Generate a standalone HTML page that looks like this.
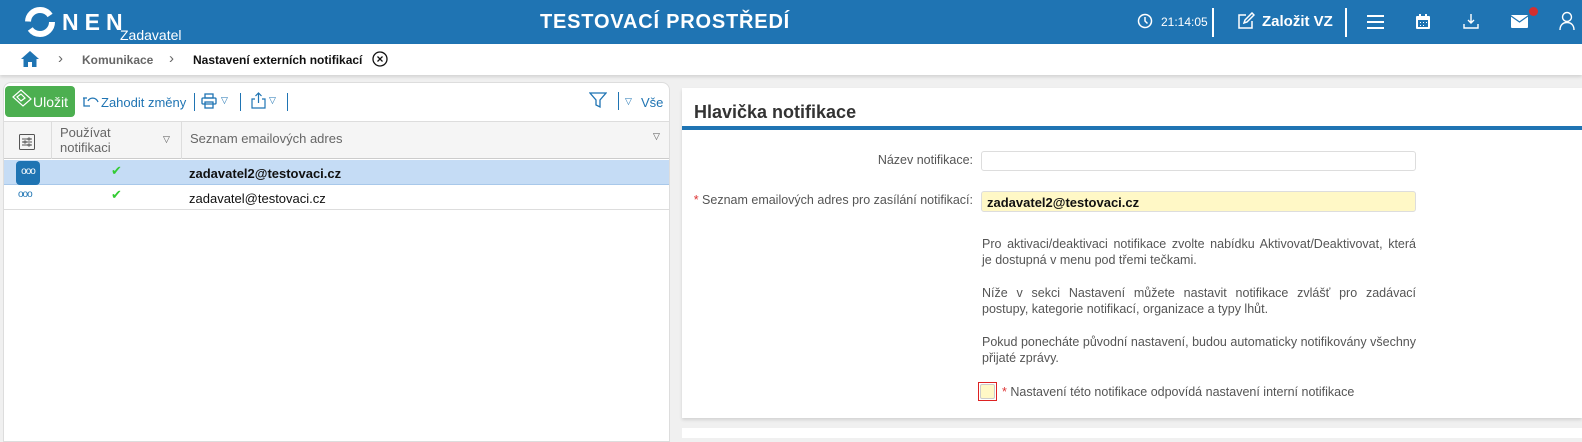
<!DOCTYPE html>
<html><head><meta charset="utf-8"><style>
*{box-sizing:border-box;margin:0;padding:0}
body{width:1582px;height:435px;overflow:hidden;background:#f0f0f0;font-family:"Liberation Sans",sans-serif;position:relative;color:#222}
.a{position:absolute}
.top{left:0;top:0;width:1582px;height:44px;background:#1f74b3;color:#fff}
.bc{left:0;top:44px;width:1582px;height:31px;background:#fff;box-shadow:0 2px 3px rgba(0,0,0,.12)}
.lp{left:3px;top:82px;width:667px;height:360px;background:#fff;border:1px solid #ddd;border-radius:8px 8px 0 0}
.rp{left:682px;top:88px;width:900px;height:330px;background:#fff;box-shadow:0 2px 3px rgba(0,0,0,.12)}
.lbl{font-size:12.5px;color:#555;text-align:right;white-space:nowrap}
.p{font-size:12.5px;color:#555;line-height:16px;text-align:justify;width:434px}
</style></head><body>
<div class="a top">
 <svg class="a" style="left:24px;top:6px" width="32" height="32" viewBox="0 0 32 32"><circle cx="16" cy="16" r="12" fill="none" stroke="#fff" stroke-width="6" stroke-dasharray="30 8"/></svg>
 <div class="a" style="left:62px;top:9px;font-size:23px;font-weight:bold;letter-spacing:6px">NEN</div>
 <div class="a" style="left:120px;top:27px;font-size:14px">Zadavatel</div>
 <div class="a" style="left:540px;top:11px;font-size:20px;font-weight:bold;letter-spacing:.8px">TESTOVACÍ PROSTŘEDÍ</div>
 <svg class="a" style="left:1137px;top:13px" width="16" height="16" viewBox="0 0 16 16" fill="none" stroke="#fff" stroke-width="1.5"><circle cx="8" cy="8" r="6.5"/><path d="M8 4v4l2.5 2.5"/></svg>
 <div class="a" style="left:1161px;top:15px;font-size:12px">21:14:05</div>
 <div class="a" style="left:1212px;top:8px;width:2px;height:29px;background:#fff"></div>
 <svg class="a" style="left:1237px;top:12px" width="18" height="18" viewBox="0 0 18 18" fill="none" stroke="#fff" stroke-width="1.5"><path d="M9 3H2v13h13V9"/><path d="M7 11l1-3 7-7 2 2-7 7z"/></svg>
 <div class="a" style="left:1262px;top:13px;font-size:15px;font-weight:bold">Založit VZ</div>
 <div class="a" style="left:1345px;top:8px;width:2px;height:29px;background:#fff"></div>
 <div class="a" style="left:1367px;top:15px;width:17px;height:2px;background:#fff;box-shadow:0 6px 0 #fff,0 12px 0 #fff"></div>
 <svg class="a" style="left:1415px;top:13px" width="16" height="17" viewBox="0 0 16 17" fill="#fff"><rect x="1" y="3" width="14" height="13" rx="1"/><rect x="3" y="7" width="10" height="7" fill="#1f74b3"/><path d="M4 1h2v4H4zM10 1h2v4h-2z"/><path d="M5 9h1v1H5zM8 9h1v1H8zM11 9h1v1h-1zM5 12h1v1H5zM8 12h1v1H8z"/></svg>
 <svg class="a" style="left:1463px;top:13px" width="16" height="17" viewBox="0 0 16 17" fill="none" stroke="#fff" stroke-width="1.4"><path d="M8 1v9M5 7l3 3 3-3M1 11v4h14v-4"/></svg>
 <svg class="a" style="left:1511px;top:15px" width="17" height="13" viewBox="0 0 17 13"><rect width="17" height="13" rx="1" fill="#fff"/><path d="M0 1l8.5 6L17 1" fill="none" stroke="#1f74b3" stroke-width="1.2"/></svg>
 <div class="a" style="left:1529px;top:7px;width:9px;height:9px;border-radius:50%;background:#d32f2f"></div>
 <svg class="a" style="left:1559px;top:11px" width="16" height="20" viewBox="0 0 16 20" fill="none" stroke="#fff" stroke-width="1.4"><circle cx="8" cy="6" r="4.5"/><path d="M1 19c0-5 3-7.5 7-7.5s7 2.5 7 7.5"/></svg>
</div>
<div class="a bc">
 <svg class="a" style="left:21px;top:7px" width="18" height="16" viewBox="0 0 18 16" fill="#1f74b3"><path d="M9 0L0 8h2.5v8h4.5v-5h4v5h4.5V8H18z"/></svg>
 <div class="a" style="left:58px;top:6px;font-size:15px;color:#666">›</div>
 <div class="a" style="left:82px;top:9px;font-size:12px;color:#666;font-weight:bold">Komunikace</div>
 <div class="a" style="left:169px;top:6px;font-size:15px;color:#666">›</div>
 <div class="a" style="left:193px;top:9px;font-size:12px;color:#111;font-weight:bold">Nastavení externích notifikací</div>
 <svg class="a" style="left:372px;top:7px" width="16" height="16" viewBox="0 0 16 16" fill="none" stroke="#111" stroke-width="1.3"><circle cx="8" cy="8" r="7"/><path d="M5.5 5.5l5 5M10.5 5.5l-5 5"/></svg>
</div>
<div class="a lp">
 <div class="a" style="left:1px;top:3px;width:70px;height:31px;background:#4caf50;border-radius:4px;color:#fff;font-size:14px;padding:8px 0 0 28px">Uložit</div>
 <svg class="a" style="left:7px;top:6px" width="22" height="18" viewBox="0 0 22 18" fill="none" stroke="#fff" stroke-width="1.2"><path d="M2 8l8-7 10 9-8 7z"/><path d="M6 8l4-3 4 4-4 3z"/></svg>
 <svg class="a" style="left:78px;top:12px" width="18" height="12" viewBox="0 0 18 12" fill="none" stroke="#1f74b3" stroke-width="1.3"><path d="M1 3h4M2 3v8h6M6 6c2-4 8-4 10 1"/></svg>
 <div class="a" style="left:97px;top:12px;font-size:13px;color:#1f74b3">Zahodit změny</div>
 <div class="a" style="left:190px;top:10px;width:1px;height:18px;background:#1f74b3"></div>
 <svg class="a" style="left:197px;top:10px" width="16" height="16" viewBox="0 0 16 16" fill="none" stroke="#1f74b3" stroke-width="1.3"><rect x="4" y="1" width="8" height="4"/><rect x="1" y="5" width="14" height="6" rx="1"/><rect x="4" y="9" width="8" height="6"/></svg>
 <div class="a" style="left:217px;top:12px;font-size:9px;color:#1f74b3">▽</div>
 <div class="a" style="left:236px;top:10px;width:1px;height:18px;background:#1f74b3"></div>
 <svg class="a" style="left:247px;top:9px" width="15" height="17" viewBox="0 0 15 17" fill="none" stroke="#1f74b3" stroke-width="1.2"><path d="M4 7H1v9h13V7h-3M7.5 11V1M4.5 4l3-3 3 3"/></svg>
 <div class="a" style="left:265px;top:12px;font-size:9px;color:#1f74b3">▽</div>
 <div class="a" style="left:283px;top:10px;width:1px;height:18px;background:#1f74b3"></div>
 <svg class="a" style="left:585px;top:9px" width="18" height="17" viewBox="0 0 18 17" fill="none" stroke="#1f74b3" stroke-width="1.3"><path d="M1 1h16l-6 7v7l-4-2V8z"/></svg>
 <div class="a" style="left:614px;top:9px;width:1px;height:18px;background:#1f74b3"></div>
 <div class="a" style="left:621px;top:13px;font-size:9px;color:#1f74b3">▽</div>
 <div class="a" style="left:637px;top:12px;font-size:13px;color:#1f74b3">Vše</div>
 <div class="a" style="left:0;top:38px;width:665px;height:38px;background:#f5f5f5;border-top:1px solid #ddd;border-bottom:1px solid #ccc"></div>
 <div class="a" style="left:47px;top:38px;width:1px;height:38px;background:#ddd"></div>
 <div class="a" style="left:177px;top:38px;width:1px;height:38px;background:#ddd"></div>
 <svg class="a" style="left:15px;top:51px" width="16" height="16" viewBox="0 0 16 16" fill="none" stroke="#555" stroke-width="1"><rect x=".5" y=".5" width="15" height="15" rx="1"/><path d="M3 5h10M3 8h10M3 11h10"/><circle cx="10" cy="5" r="1" fill="#fff"/><circle cx="6" cy="8" r="1" fill="#fff"/><circle cx="10" cy="11" r="1" fill="#fff"/></svg>
 <div class="a" style="left:56px;top:42px;font-size:13px;color:#666;line-height:15px">Používat<br>notifikaci</div>
 <div class="a" style="left:159px;top:51px;font-size:9px;color:#555">▽</div>
 <div class="a" style="left:186px;top:48px;font-size:13px;color:#666">Seznam emailových adres</div>
 <div class="a" style="left:649px;top:48px;font-size:9px;color:#555">▽</div>
 <div class="a" style="left:0;top:77px;width:665px;height:25px;background:#c5dcf5;border-bottom:1px solid #a8c8ea"></div>
 <div class="a" style="left:12px;top:78px;width:24px;height:24px;background:#1f74b3;border-radius:4px;color:#fff;font-size:10px;text-align:center;line-height:22px;letter-spacing:-1px">ooo</div>
 <div class="a" style="left:107px;top:80px;font-size:13px;color:#3c3">✔</div>
 <div class="a" style="left:185px;top:83px;font-size:13px;font-weight:bold;color:#111">zadavatel2@testovaci.cz</div>
 <div class="a" style="left:0;top:102px;width:665px;height:25px;border-bottom:1px solid #ddd"></div>
 <div class="a" style="left:14px;top:106px;font-size:10px;color:#1f74b3;letter-spacing:-1px">ooo</div>
 <div class="a" style="left:107px;top:104px;font-size:13px;color:#3c3">✔</div>
 <div class="a" style="left:185px;top:108px;font-size:13px;color:#111">zadavatel@testovaci.cz</div>
</div>
<div class="a rp">
 <div class="a" style="left:12px;top:14px;font-size:18px;font-weight:bold;color:#333">Hlavička notifikace</div>
 <div class="a" style="left:0;top:38px;width:900px;height:4px;background:#1f74b3"></div>
 <div class="lbl a" style="right:609px;top:65px">Název notifikace:</div>
 <div class="a" style="left:299px;top:63px;width:435px;height:20px;border:1px solid #ddd;border-radius:3px"></div>
 <div class="lbl a" style="right:609px;top:105px"><span style="color:#d33">*</span> Seznam emailových adres pro zasílání notifikací:</div>
 <div class="a" style="left:299px;top:103px;width:435px;height:21px;border:1px solid #ddd;border-radius:3px;background:#fff8c6;font-size:13px;font-weight:bold;color:#111;padding:3px 5px">zadavatel2@testovaci.cz</div>
 <div class="p a" style="left:300px;top:148px">Pro aktivaci/deaktivaci notifikace zvolte nabídku Aktivovat/Deaktivovat, která je dostupná v menu pod třemi tečkami.</div>
 <div class="p a" style="left:300px;top:197px">Níže v sekci Nastavení můžete nastavit notifikace zvlášť pro zadávací postupy, kategorie notifikací, organizace a typy lhůt.</div>
 <div class="p a" style="left:300px;top:246px">Pokud ponecháte původní nastavení, budou automaticky notifikovány všechny přijaté zprávy.</div>
 <div class="a" style="left:296px;top:294px;width:19px;height:19px;border:1px solid #d22"><div style="margin:1px;width:15px;height:15px;background:#fff8c6;border:1px solid #ccc;border-radius:2px"></div></div>
 <div class="a" style="left:320px;top:297px;font-size:12.5px;color:#555"><span style="color:#d33">*</span> Nastavení této notifikace odpovídá nastavení interní notifikace</div>
</div>
<div class="a" style="left:682px;top:428px;width:900px;height:10px;background:#fff"></div>
</body></html>
